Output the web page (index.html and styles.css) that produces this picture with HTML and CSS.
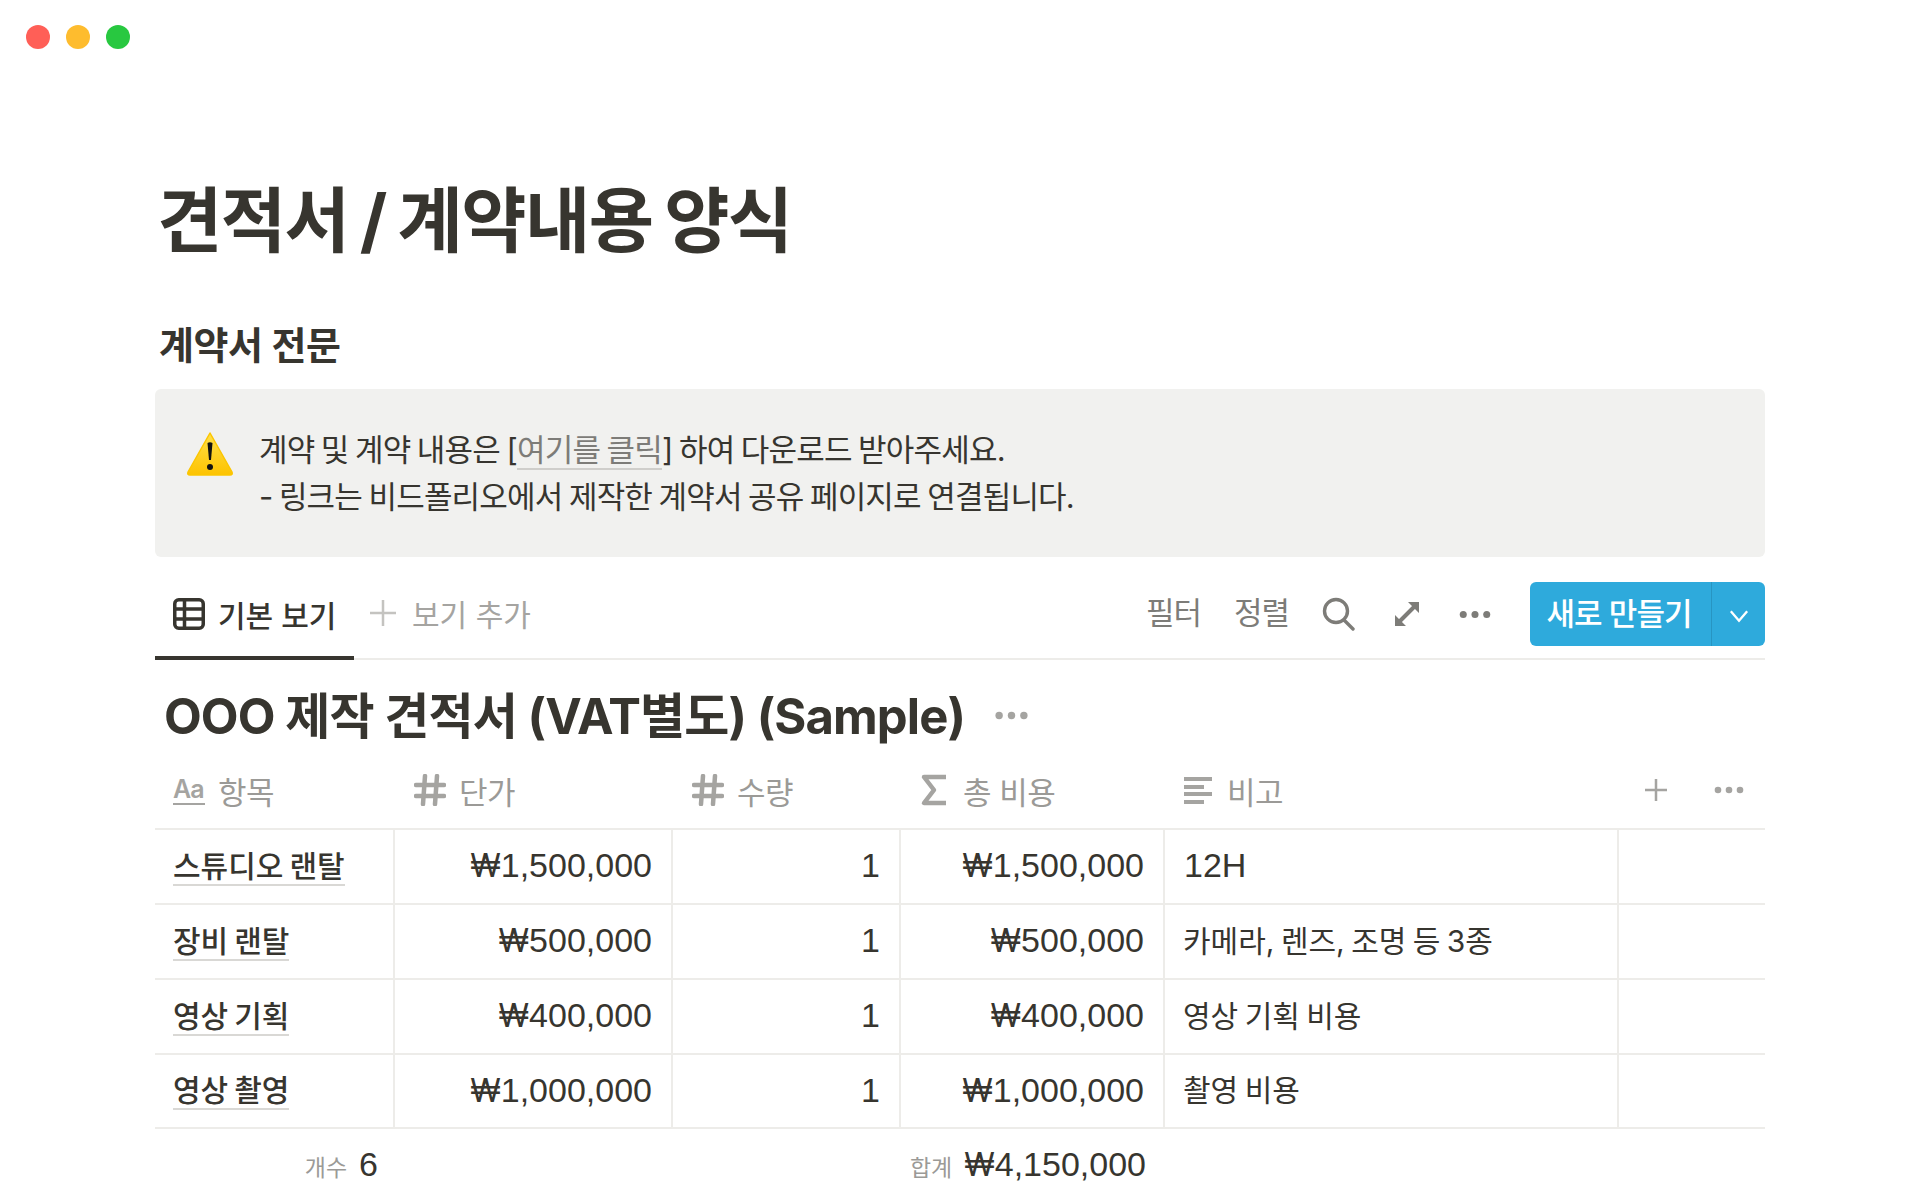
FILE: index.html
```html
<!DOCTYPE html>
<html lang="ko">
<head>
    <meta charset="UTF-8">
    <meta name="viewport" content="width=device-width, initial-scale=1.0">
    <title>견적서 / 계약내용 양식</title>
    <link rel="stylesheet" href="styles.css">
</head>
<body>
    <!-- Window buttons -->
    <div class="traffic">
        <span class="dot dot-red"></span>
        <span class="dot dot-yellow"></span>
        <span class="dot dot-green"></span>
    </div>

    <main class="page">
        <h1 class="page-title">견적서 / 계약내용 양식</h1>
        <h2 class="section-title">계약서 전문</h2>

        <div class="callout">
            <svg class="callout-icon" viewBox="0 0 50 46">
                <defs>
                    <linearGradient id="warn" x1="0" y1="0" x2="0" y2="1">
                        <stop offset="0" stop-color="#ffdf4a"/>
                        <stop offset="1" stop-color="#fdc300"/>
                    </linearGradient>
                </defs>
                <path d="M25 2 L47 41 Q48 44 45 44 L5 44 Q2 44 3 41 Z" fill="url(#warn)" stroke="#fcc600" stroke-width="1.500" stroke-linejoin="round"/>
                <path d="M22.500 12 Q25 10.500 27.500 12 L26 29 L24 29 Z" fill="#111"/>
                <circle cx="25" cy="36" r="3" fill="#111"/>
            </svg>
            <div class="callout-text">
                <p>계약 및 계약 내용은 [<a class="callout-link" href="#">여기를 클릭</a>] 하여 다운로드 받아주세요.</p>
                <p>- 링크는 비드폴리오에서 제작한 계약서 공유 페이지로 연결됩니다.</p>
            </div>
        </div>

        <!-- View tabs and actions -->
        <div class="toolbar">
            <div class="tab tab-active">
                <svg class="tab-icon" viewBox="0 0 32 32" fill="none" stroke="#37352f" stroke-width="3.500">
                    <rect x="1.750" y="1.750" width="28.500" height="28.500" rx="4"/>
                    <path d="M1.500 11 H30.500 M1.500 21 H30.500 M11.500 1.500 V30.500"/>
                </svg>
                기본 보기
            </div>
            <div class="tab tab-add">
                <svg class="tab-plus" viewBox="0 0 28 28" stroke="#c4c3c0" stroke-width="2.500">
                    <path d="M14 1 V27 M1 14 H27"/>
                </svg>
                보기 추가
            </div>
            <div class="actions">
                <span class="action-text">필터</span>
                <span class="action-text">정렬</span>
                <svg class="action-search" viewBox="0 0 34 34" fill="none" stroke="#7d7c78" stroke-width="3.400" stroke-linecap="round">
                    <circle cx="14" cy="14" r="11.500"/>
                    <path d="M22 23 L31 32"/>
                </svg>
                <svg class="action-expand" viewBox="0 0 28 28" fill="#7d7c78" stroke="#7d7c78" stroke-width="4">
                    <path d="M7 21 L21 7"/>
                    <path d="M26 2 V13 L15 2 Z M2 26 V15 L13 26 Z" stroke="none"/>
                </svg>
                <svg class="action-more" viewBox="0 0 30 8" fill="#7d7c78">
                    <circle cx="4" cy="4" r="3.300"/>
                    <circle cx="15" cy="4" r="3.300"/>
                    <circle cx="26" cy="4" r="3.300"/>
                </svg>
                <div class="new-btn">
                    <span class="new-btn-label">새로 만들기</span>
                    <span class="new-btn-arrow">
                        <svg viewBox="0 0 18 12" fill="none" stroke="#fff" stroke-width="2">
                            <path d="M2 2 L9 10 L16 2"/>
                        </svg>
                    </span>
                </div>
            </div>
        </div>

        <div class="db-head">
            <h3 class="db-title">OOO 제작 견적서 (VAT별도) (Sample)</h3>
            <svg class="db-more" viewBox="0 0 32 8" fill="#a5a4a1">
                <circle cx="4" cy="4" r="3.600"/>
                <circle cx="16" cy="4" r="3.600"/>
                <circle cx="28" cy="4" r="3.600"/>
            </svg>
        </div>

        <table class="quote">
            <colgroup>
                <col class="col-name">
                <col class="col-price">
                <col class="col-qty">
                <col class="col-total">
                <col class="col-note">
                <col class="col-rest">
            </colgroup>
            <thead>
                <tr>
                    <th><span class="th-inner"><span class="aa">Aa</span>항목</span></th>
                    <th><span class="th-inner th-shift">
                        <svg class="th-icon" viewBox="0 0 32 32" stroke="#a5a4a1" stroke-width="4.500" stroke-linecap="round"><path d="M11 2 L9 30 M23 2 L21 30 M2 11 H30 M2 22 H30"/></svg>
                        단가</span></th>
                    <th><span class="th-inner th-shift">
                        <svg class="th-icon" viewBox="0 0 32 32" stroke="#a5a4a1" stroke-width="4.500" stroke-linecap="round"><path d="M11 2 L9 30 M23 2 L21 30 M2 11 H30 M2 22 H30"/></svg>
                        수량</span></th>
                    <th><span class="th-inner">
                        <svg class="th-icon" viewBox="0 0 32 32" fill="none" stroke="#a5a4a1" stroke-width="4.500" stroke-linejoin="round"><path d="M28 3 H6 L16 16 L6 29 H28"/></svg>
                        총 비용</span></th>
                    <th><span class="th-inner">
                        <svg class="th-icon" viewBox="0 0 32 32" fill="#a5a4a1"><rect x="2" y="3" width="28" height="4"/><rect x="2" y="11" width="20" height="4"/><rect x="2" y="18" width="28" height="4"/><rect x="2" y="26" width="20" height="4"/></svg>
                        비고</span></th>
                    <th class="th-tools"><span class="th-tools-inner">
                        <svg class="th-plus" viewBox="0 0 24 24" stroke="#a5a4a1" stroke-width="2.500"><path d="M12 1 V23 M1 12 H23"/></svg>
                        <svg class="th-more" viewBox="0 0 30 8" fill="#a5a4a1"><circle cx="4" cy="4" r="3.300"/><circle cx="15" cy="4" r="3.300"/><circle cx="26" cy="4" r="3.300"/></svg>
                    </span></th>
                </tr>
            </thead>
            <tbody>
                <tr>
                    <td class="text"><span class="row-name">스튜디오 랜탈</span></td>
                    <td class="num"><span class="won">₩</span>1,500,000</td>
                    <td class="num">1</td>
                    <td class="num"><span class="won">₩</span>1,500,000</td>
                    <td class="latin">12H</td>
                    <td></td>
                </tr>
                <tr>
                    <td class="text"><span class="row-name">장비 랜탈</span></td>
                    <td class="num"><span class="won">₩</span>500,000</td>
                    <td class="num">1</td>
                    <td class="num"><span class="won">₩</span>500,000</td>
                    <td class="text">카메라, 렌즈, 조명 등 3종</td>
                    <td></td>
                </tr>
                <tr>
                    <td class="text"><span class="row-name">영상 기획</span></td>
                    <td class="num"><span class="won">₩</span>400,000</td>
                    <td class="num">1</td>
                    <td class="num"><span class="won">₩</span>400,000</td>
                    <td class="text">영상 기획 비용</td>
                    <td></td>
                </tr>
                <tr class="row-last">
                    <td class="text"><span class="row-name">영상 촬영</span></td>
                    <td class="num"><span class="won">₩</span>1,000,000</td>
                    <td class="num">1</td>
                    <td class="num"><span class="won">₩</span>1,000,000</td>
                    <td class="text">촬영 비용</td>
                    <td></td>
                </tr>
            </tbody>
            <tfoot>
                <tr>
                    <td class="calc calc-count"><span class="calc-label">개수</span>6</td>
                    <td></td>
                    <td></td>
                    <td class="calc calc-sum"><span class="calc-label">합계</span><span class="won">₩</span>4,150,000</td>
                    <td></td>
                    <td></td>
                </tr>
            </tfoot>
        </table>
    </main>
</body>
</html>
```

FILE: styles.css
```css
body {
    font-family: Inter, "Noto Sans CJK KR", sans-serif;
    margin: 0;
    padding: 0;
    background-color: #fff;
    color: #37352f;
    overflow: hidden;
    height: 1200px;
}

.traffic {
    display: flex;
    gap: 16px;
    padding: 25px 0 25px 26px;
}

.dot {
    width: 24px;
    height: 24px;
    border-radius: 50%;
}

.dot-red { background-color: #ff5f57; }
.dot-yellow { background-color: #febc2e; }
.dot-green { background-color: #28c840; }

.page {
    width: 1610px;
    margin-left: 155px;
}

.page-title {
    margin: 106px 0 0 2px;
    font-size: 71px;
    line-height: 80px;
    font-weight: 700;
    letter-spacing: -1.6px;
    word-spacing: -3.5px;
}

.section-title {
    margin: 61px 0 0 4px;
    font-size: 38px;
    line-height: 48px;
    font-weight: 600;
    letter-spacing: -0.5px;
}

.callout {
    display: flex;
    margin-top: 20px;
    height: 168px;
    box-sizing: border-box;
    padding: 37px 0 0 30px;
    background-color: #f1f1ef;
    border-radius: 6px;
}

.callout-icon {
    width: 50px;
    height: 46px;
    margin-top: 5px;
    margin-right: 24px;
}

.callout-text p {
    margin: 0;
    font-size: 31px;
    line-height: 47px;
    letter-spacing: -0.8px;
    word-spacing: -1.5px;
}

.callout-link {
    color: #7d7c78;
    text-decoration: none;
    border-bottom: 2px solid #cfcecb;
}

.toolbar {
    display: flex;
    align-items: stretch;
    margin-top: 25px;
    height: 76px;
    border-bottom: 2px solid #edece9;
}

.tab {
    display: flex;
    align-items: center;
    font-size: 30px;
    height: 76px;
    box-sizing: border-box;
}

.tab-active {
    width: 199px;
    padding-left: 18px;
    padding-bottom: 10px;
    gap: 13px;
    font-weight: 500;
    border-bottom: 4px solid #37352f;
    margin-bottom: -2px;
    height: 78px;
}

.tab-icon {
    width: 32px;
    height: 32px;
}

.tab-add {
    margin-left: 15px;
    gap: 15px;
    color: #a5a4a1;
    padding-bottom: 14px;
}

.tab-plus {
    width: 28px;
    height: 28px;
}

.actions {
    display: flex;
    align-items: center;
    margin-left: auto;
    height: 64px;
}

.action-text {
    font-size: 31px;
    line-height: 62px;
    height: 64px;
    color: #7d7c78;
    margin-right: 33px;
    letter-spacing: -1px;
}

.action-search {
    width: 34px;
    height: 34px;
    margin-right: 37px;
}

.action-expand {
    width: 28px;
    height: 28px;
    margin-right: 38px;
}

.action-more {
    width: 32px;
    height: 9px;
    margin-right: 39px;
}

.new-btn {
    display: flex;
    width: 235px;
    height: 64px;
    background-color: #2eaadc;
    border-radius: 6px;
    color: #fff;
    box-sizing: border-box;
}

.new-btn-label {
    width: 182px;
    box-sizing: border-box;
    padding-right: 3px;
    font-size: 31px;
    font-weight: 500;
    line-height: 64px;
    text-align: center;
    letter-spacing: -1px;
    border-right: 1px solid #2795c2;
}

.new-btn-arrow {
    display: flex;
    flex: 1;
    align-items: center;
    justify-content: center;
    padding-top: 4px;
}

.new-btn-arrow svg {
    width: 22px;
    height: 14px;
}

.db-head {
    display: flex;
    align-items: center;
    gap: 30px;
    height: 60px;
    margin-top: 27px;
    padding-left: 9px;
}

.db-title {
    margin: 0;
    font-size: 49px;
    line-height: 60px;
    font-weight: 700;
    letter-spacing: -0.9px;
}

.db-more {
    width: 33px;
    height: 9px;
    margin-bottom: 4px;
}

.quote {
    width: 1610px;
    margin-top: 5px;
    border-collapse: collapse;
    table-layout: fixed;
}

.col-name { width: 239px; }
.col-price { width: 278px; }
.col-qty { width: 228px; }
.col-total { width: 264px; }
.col-note { width: 454px; }
.col-rest { width: 147px; }

.quote th {
    height: 76px;
    padding: 0 18px;
    text-align: left;
    font-size: 31px;
    font-weight: 400;
    color: #9b9a97;
    border-bottom: 2px solid #edece9;
}

.th-inner {
    display: flex;
    align-items: center;
    gap: 13px;
    white-space: nowrap;
    letter-spacing: -0.5px;
}

.th-shift {
    padding-left: 2px;
}

.aa {
    width: 32px;
    font-size: 25px;
    font-weight: 600;
    letter-spacing: -1px;
    line-height: 28px;
    border-bottom: 2px solid #a5a4a1;
    color: #a5a4a1;
}

.th-icon {
    width: 32px;
    height: 32px;
}

.th-tools-inner {
    display: flex;
    align-items: center;
    justify-content: flex-end;
    gap: 46px;
    margin-right: 3px;
}

.th-plus {
    width: 24px;
    height: 24px;
}

.th-more {
    width: 30px;
    height: 8px;
}

.quote td {
    height: 75px;
    padding: 0 19px 2px;
    box-sizing: border-box;
    font-family: "Liberation Sans", "Noto Sans CJK KR", sans-serif;
    font-size: 34px;
    white-space: nowrap;
    border-right: 2px solid #edece9;
    border-bottom: 2px solid #edece9;
}

.quote td:last-child {
    border-right: none;
}

.quote td.num {
    text-align: right;
}

.quote td.text {
    padding: 0 19px 6px 18px;
    font-family: Inter, "Noto Sans CJK KR", sans-serif;
    font-size: 30px;
    word-spacing: -2px;
}

.won {
    font-family: Inter, sans-serif;
    font-size: 32px;
}

.row-last td {
    height: 74px;
}

.row-name {
    border-bottom: 2px solid #d9d8d5;
    font-weight: 500;
}

.quote tfoot td {
    border: none;
    height: 74px;
    text-align: right;
    padding-bottom: 2px;
}

.quote tfoot td.calc-count {
    padding-right: 16px;
}

.quote tfoot td.calc-sum {
    padding-left: 0;
    padding-right: 18px;
}

.calc-label {
    font-family: Inter, "Noto Sans CJK KR", sans-serif;
    font-size: 23px;
    color: #9b9a97;
    margin-right: 12px;
}
```
